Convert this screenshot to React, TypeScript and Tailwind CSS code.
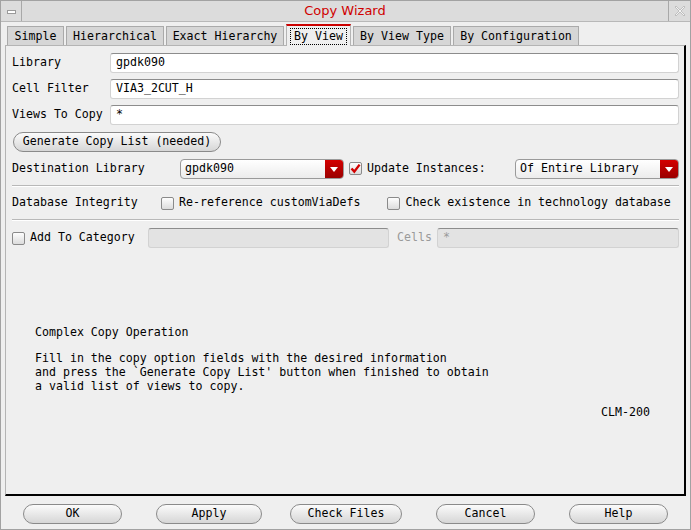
import React from "react";

const mono = { fontFamily: '"DejaVu Sans Mono", "Liberation Mono", monospace' };

function TextField({ value, disabled, className }: { value: string; disabled?: boolean; className?: string }) {
  return (
    <div
      className={`h-[20px] flex items-center pl-[5px] rounded-[3px] border border-[#d2d2d2] border-t-[#8c8c8c] ${
        disabled ? "bg-[#e3e3e3] text-[#9a9a9a]" : "bg-white text-black"
      } ${className ?? ""}`}
    >
      {value}
    </div>
  );
}

function Checkbox({ checked }: { checked?: boolean }) {
  return (
    <div className="w-[13px] h-[13px] shrink-0 rounded-[2px] border border-[#8a8a8a] bg-gradient-to-b from-[#fdfdfd] to-[#dcdcdc] flex items-center justify-center">
      {checked && (
        <svg width="11" height="11" viewBox="0 0 11 11">
          <path d="M1.5 5.5 L4.3 8.6 L9.6 1.6" stroke="#d20000" strokeWidth="2.4" fill="none" />
        </svg>
      )}
    </div>
  );
}

function Dropdown({ value, className }: { value: string; className?: string }) {
  return (
    <div
      className={`h-[20px] flex items-center rounded-[4px] border border-[#9a9a9a] bg-gradient-to-b from-white to-[#ececec] overflow-hidden ${className ?? ""}`}
    >
      <span className="flex-1 pl-[4px]">{value}</span>
      <div className="w-[18px] h-full bg-gradient-to-b from-[#d40000] to-[#9a0000] flex items-center justify-center">
        <svg width="8" height="5" viewBox="0 0 8 5">
          <path d="M0 0 L8 0 L4 5 Z" fill="white" />
        </svg>
      </div>
    </div>
  );
}

function PillButton({ label, className }: { label: string; className?: string }) {
  return (
    <div
      className={`h-[20px] flex items-center justify-center rounded-full border border-[#8a8a8a] bg-gradient-to-b from-[#fbfbfb] to-[#d6d6d6] text-black ${className ?? ""}`}
    >
      {label}
    </div>
  );
}

const tabs = [
  { label: "Simple", w: "w-[57px]" },
  { label: "Hierarchical", w: "w-[98px]" },
  { label: "Exact Hierarchy", w: "w-[118px]" },
  { label: "By View", w: "w-[65px]", active: true },
  { label: "By View Type", w: "w-[98px]" },
  { label: "By Configuration", w: "w-[126px]" },
];

export default function App() {
  return (
    <div
      className="w-[691px] h-[530px] border border-[#a2a2a2] bg-[#efefef] flex flex-col text-[11.6px] text-black overflow-hidden"
      style={mono}
    >
      {/* title bar */}
      <div className="h-[21px] flex border-b border-[#b8b8b8] bg-[#dcdcdc]">
        <div className="w-[21px] h-full border-r border-[#a8a8a8] flex items-center justify-center">
          <div className="w-[9px] h-[4px] border border-[#9a9a9a] bg-white mt-[2px]" />
        </div>
        <div
          className="flex-1 flex items-center justify-center text-[13px] text-[#d00000]"
          style={{ fontFamily: '"DejaVu Sans", "Liberation Sans", sans-serif' }}
        >
          Copy Wizard
        </div>
        <div className="w-[22px] h-full border-l border-[#a8a8a8] flex items-center justify-center">
          <svg width="12" height="12" viewBox="0 0 12 12">
            <path
              d="M1 2 L2 1 L6 5 L10 1 L11 2 L7 6 L11 10 L10 11 L6 7 L2 11 L1 10 L5 6 Z"
              fill="#f4f4f4"
              stroke="#b4b4b4"
              strokeWidth="0.8"
            />
          </svg>
        </div>
      </div>

      {/* tabs */}
      <div className="h-[23px] flex items-end gap-[2px] pl-[6px]">
        {tabs.map((t) =>
          t.active ? (
            <div
              key={t.label}
              className={`${t.w} h-[22px] border-t-2 border-[#cc0000] border-x border-x-[#b4b4b4] bg-[#efefef] flex items-center justify-center pt-px relative z-10 -mb-px`}
            >
              <span className="border border-dotted border-black px-[3px] leading-[15px]">{t.label}</span>
            </div>
          ) : (
            <div
              key={t.label}
              className={`${t.w} h-[19px] border border-b-0 border-[#aaaaaa] bg-[#d6d6d6] flex items-center justify-center pt-[2px]`}
            >
              {t.label}
            </div>
          )
        )}
      </div>

      {/* panel */}
      <div className="ml-[4px] mr-[4px] h-[451px] border-l border-t border-[#b4b4b4] border-r-2 border-b-2 border-r-black border-b-black bg-[#efefef] pl-[6px] pr-[5px] flex flex-col">
        <div className="mt-[7px] flex items-center">
          <span className="w-[98px]">Library</span>
          <TextField value="gpdk090" className="flex-1" />
        </div>
        <div className="mt-[6px] flex items-center">
          <span className="w-[98px]">Cell Filter</span>
          <TextField value="VIA3_2CUT_H" className="flex-1" />
        </div>
        <div className="mt-[6px] flex items-center">
          <span className="w-[98px]">Views To Copy</span>
          <TextField value="*" className="flex-1" />
        </div>
        <div className="mt-[7px] flex">
          <PillButton label="Generate Copy List (needed)" className="ml-px w-[208px]" />
        </div>
        <div className="mt-[7px] flex items-center">
          <span className="w-[168px]">Destination Library</span>
          <Dropdown value="gpdk090" className="w-[164px]" />
          <div className="ml-[5px] flex items-center gap-[5px]">
            <Checkbox checked />
            <span>Update Instances:</span>
          </div>
          <Dropdown value="Of Entire Library" className="ml-auto w-[164px]" />
        </div>
        <div className="mt-[6px] h-[2px] border-t border-[#b8b8b8] border-b border-b-white" />
        <div className="mt-[6px] h-[20px] flex items-center">
          <span className="w-[149px]">Database Integrity</span>
          <Checkbox />
          <span className="ml-[5px]">Re-reference customViaDefs</span>
          <div className="ml-[27px]">
            <Checkbox />
          </div>
          <span className="ml-[5px]">Check existence in technology database</span>
        </div>
        <div className="mt-[6px] h-[2px] border-t border-[#b8b8b8] border-b border-b-white" />
        <div className="mt-[7px] flex items-center">
          <Checkbox />
          <span className="ml-[5px] w-[118px]">Add To Category</span>
          <TextField value="" disabled className="w-[241px]" />
          <span className="ml-[8px] text-[#9a9a9a]">Cells</span>
          <TextField value="*" disabled className="ml-[5px] flex-1" />
        </div>

        <div className="mt-[77px] ml-[23px] leading-[14px]">
          <div>Complex Copy Operation</div>
          <div className="mt-[12px]">Fill in the copy option fields with the desired information</div>
          <div>and press the `Generate Copy List' button when finished to obtain</div>
          <div>a valid list of views to copy.</div>
          <div className="mt-[12px] ml-[566px]">CLM-200</div>
        </div>
      </div>

      {/* bottom buttons */}
      <div className="flex items-center h-[33px] pt-[2px]">
        <PillButton label="OK" className="ml-[22px] w-[99px]" />
        <PillButton label="Apply" className="ml-[34px] w-[106px]" />
        <PillButton label="Check Files" className="ml-[28px] w-[112px]" />
        <PillButton label="Cancel" className="ml-[34px] w-[99px]" />
        <PillButton label="Help" className="ml-[34px] w-[99px]" />
      </div>
    </div>
  );
}
